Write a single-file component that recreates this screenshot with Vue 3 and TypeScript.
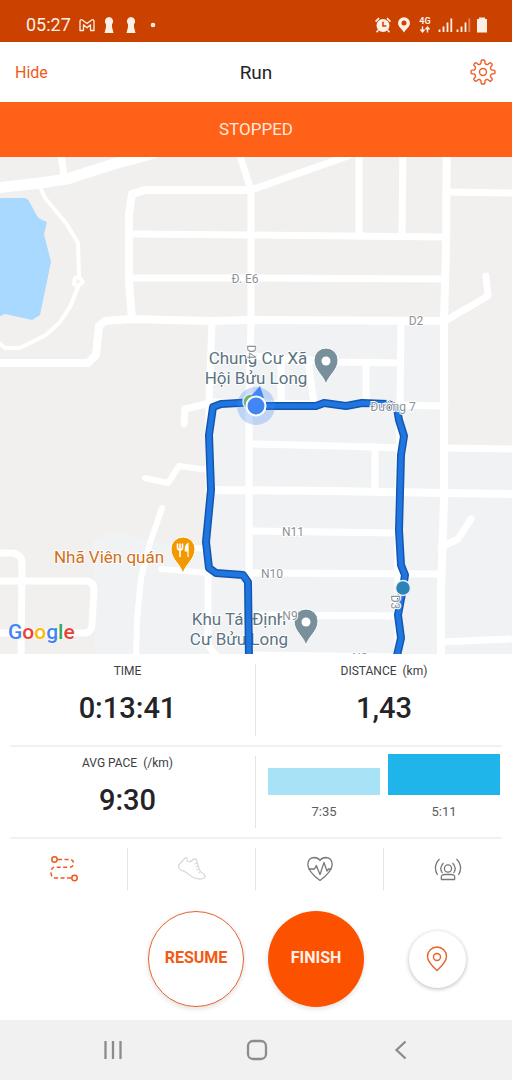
<script setup lang="ts">
interface Split {
  pace: string
  height: number
  current: boolean
}

interface MapLabel {
  text: string
  x: number
  y: number
}

const splits: Split[] = [
  { pace: '7:35', height: 27, current: false },
  { pace: '5:11', height: 41, current: true },
]

const roads: { width: number; paths: string[] }[] = [
  {
    width: 11,
    paths: ['M-4 188 L40 183 L67 179 L117 163 L147 155 L256 116 L290 100'],
  },
  {
    width: 8,
    paths: [
      'M447 102 L446 250 L444 321 L444 400 L444 500 L441 590 L441 660',
      'M-4 363 H88 L96 355 L99 326 L105 321 L130 319 L210 321 L250 320 L445 321',
      'M132 319 L129 280 L129 215 L132 194 L145 190 H251',
      'M210 490 L330 491 L445 493 L516 494',
    ],
  },
  {
    width: 7,
    paths: [
      'M54 102 L64 176',
      'M225 102 L240 156 L251 190 L251 320 L249 400 L249 660',
      'M251 190 L345 157 L400 132',
      'M131 234 L250 235 L445 237',
      'M131 278 L250 278 L445 279',
      'M359 152 V235',
      'M403 140 L402 235',
      'M447 192 L516 193',
      'M445 321 L488 296 L486 276',
      'M212 321 L209 402 L209 490',
      'M401 321 L400 405 L398 540 L398 660',
      'M250 356 L336 362 L400 363',
      'M281 362 V404',
      'M308 360 L314 404',
      'M366 364 V404',
      'M184 424 L185 409 L214 402 L445 406',
      'M250 444 L375 447 L400 448',
      'M445 448 L516 449',
      'M375 447 V490',
      'M250 531 L398 533',
      'M250 573 L441 574',
      'M250 615 L398 616',
      'M250 655 L398 657',
      'M441 547 L458 539 L471 519',
      'M441 642 L509 639',
      'M-4 553 H12 Q22 554 22 564 L21 660',
      'M-4 581 H86 Q94 582 94 590 L92 625 Q91 633 84 633 H-4',
      'M208 573 L208 643 Q210 650 218 657',
    ],
  },
  {
    width: 6,
    paths: [
      'M145 478 L168 483 L179 466 L209 470',
      'M162 508 L150 543 L141 578 L137 620 L136 660',
      'M161 569 L209 573',
      'M194 548 L208 549',
    ],
  },
  {
    width: 4,
    paths: [
      'M40 187 L45 198 L66 223 L78 243 L79 277',
      'M78 287 L70 307 L60 322 L46 335 L20 348 L5 348 L-4 340',
    ],
  },
]

const route =
  'M249 660 L248 582 L243 575 L216 573 L209 568 L206 542 L211 490 L209 435 L213 407 L221 404 L256 402 L256 406 H316 L324 403 L346 406 L362 403 L388 404 L397 408 L399 420 L404 436 L401 455 L399 530 L401 565 L405 575 L403 588 L398 615 L401 638 L396 660'

const streets: MapLabel[] = [
  { text: 'Đ. E6', x: 245, y: 283 },
  { text: 'D2', x: 416, y: 325 },
  { text: 'Đường 7', x: 393, y: 411 },
  { text: 'N11', x: 293, y: 536 },
  { text: 'N10', x: 272, y: 578 },
  { text: 'N9', x: 290, y: 620 },
  { text: 'N8', x: 360, y: 662 },
]

const places: MapLabel[] = [
  { text: 'Chung Cư Xã', x: 258, y: 364 },
  { text: 'Hội Bửu Long', x: 256, y: 384 },
  { text: 'Khu Tái Định', x: 239, y: 625 },
  { text: 'Cư Bửu Long', x: 239, y: 645 },
]

const pins = [
  { x: 326, y: 361 },
  { x: 306, y: 622 },
]

const pinShape = 'M0 24 C-2 14 -12 10 -12 -1 A12 12 0 0 1 12 -1 C12 10 2 14 0 24 Z'
</script>

<template>
  <div class="screen">
    <div class="status">
      <div class="status-group">
        <span class="clock">05:27</span>
        <svg class="cell22" viewBox="0 0 22 22" aria-hidden="true">
          <path d="M4 16.500 V7.200 Q4.300 5 6.300 6 L11 9.600 L15.700 6 Q17.700 5 18 7.200 V16.500 H14.500 V10.800 L11 13.800 L7.500 10.800 V16.500 Z" fill="none" stroke="#fdeee6" stroke-width="1.300" stroke-linejoin="round" />
        </svg>
        <svg v-for="n in 2" :key="n" class="cell22" viewBox="0 0 22 22" aria-hidden="true">
          <path d="M11 3 A4.500 4.500 0 0 1 14 10.500 L14 13 L15.500 19 H6.500 L8 13 L8 10.500 A4.500 4.500 0 0 1 11 3 Z" fill="#fdeee6" />
        </svg>
        <svg class="cell22" viewBox="0 0 22 22" aria-hidden="true">
          <circle cx="11" cy="11" r="2.300" fill="#fdeee6" />
        </svg>
      </div>
      <div class="status-group">
        <svg class="cell22" viewBox="0 0 22 22" aria-hidden="true">
          <circle cx="11" cy="11.500" r="6.500" fill="#fdeee6" />
          <path d="M11 7.800 V12 H14.300" fill="none" stroke="#cb4200" stroke-width="1.500" />
          <path d="M3.600 7.600 L7 4.200 M18.400 7.600 L15 4.200 M6.400 16 L4.600 18.200 M15.600 16 L17.400 18.200" stroke="#fdeee6" stroke-width="1.700" />
        </svg>
        <svg class="cell20" viewBox="0 0 20 22" aria-hidden="true">
          <path d="M10 18.500 C8 15 4 12.500 4 9.200 A6 6 0 0 1 16 9.200 C16 12.500 12 15 10 18.500 Z" fill="#fdeee6" />
          <circle cx="10" cy="9" r="2.500" fill="#cb4200" />
        </svg>
        <svg class="cell22" viewBox="0 0 22 22" aria-hidden="true">
          <text x="11" y="10" class="net">4G</text>
          <path d="M8.500 12.500 V17.500 M6.500 15.500 L8.500 18 L10.500 15.500 M13.500 18.500 V13.500 M11.500 15.500 L13.500 13 L15.500 15.500" fill="none" stroke="#fdeee6" stroke-width="1.400" />
        </svg>
        <svg v-for="n in 2" :key="n" class="cell18" viewBox="0 0 18 22" aria-hidden="true">
          <path d="M3.500 18 V15.500 M7.500 18 V12.500 M11.500 18 V8.500" stroke="#fdeee6" stroke-width="1.800" />
          <path d="M15.300 18 V4.500" stroke="#fdeee6" stroke-width="1.800" :opacity="n === 1 ? 1 : 0.4" />
        </svg>
        <svg class="cell20" viewBox="0 0 20 22" aria-hidden="true">
          <path d="M7 3.500 H13 V5 H15 V18.500 H5 V5 H7 Z" fill="#fdeee6" />
        </svg>
      </div>
    </div>

    <header class="header">
      <button type="button" class="hide">Hide</button>
      <h1>Run</h1>
      <button type="button" class="settings" aria-label="Settings">
        <svg viewBox="-14 -14 28 28" aria-hidden="true">
          <path d="M-2.600 -8 Q-1.900 -8.400 -1.900 -9.500 V-11 Q-1.700 -12 -0.700 -12 H0.700 Q1.700 -12 1.900 -11 V-9.500 Q1.900 -8.400 2.600 -8 L3.800 -7.500 Q4.600 -7.200 5.400 -8 L6.400 -9 Q7.200 -9.500 7.900 -8.900 L8.900 -7.900 Q9.500 -7.200 9 -6.400 L8 -5.400 Q7.200 -4.600 7.500 -3.800 L8 -2.600 Q8.400 -1.900 9.500 -1.900 H11 Q12 -1.700 12 -0.700 V0.700 Q12 1.700 11 1.900 H9.500 Q8.400 1.900 8 2.600 L7.500 3.800 Q7.200 4.600 8 5.400 L9 6.400 Q9.500 7.200 8.900 7.900 L7.900 8.900 Q7.200 9.500 6.400 9 L5.400 8 Q4.600 7.200 3.800 7.500 L2.600 8 Q1.900 8.400 1.900 9.500 V11 Q1.700 12 0.700 12 H-0.700 Q-1.700 12 -1.900 11 V9.500 Q-1.900 8.400 -2.600 8 L-3.800 7.500 Q-4.600 7.200 -5.400 8 L-6.400 9 Q-7.200 9.500 -7.900 8.900 L-8.900 7.900 Q-9.500 7.200 -9 6.400 L-8 5.400 Q-7.200 4.600 -7.500 3.800 L-8 2.600 Q-8.400 1.900 -9.500 1.900 H-11 Q-12 1.700 -12 0.700 V-0.700 Q-12 -1.700 -11 -1.900 H-9.500 Q-8.400 -1.900 -8 -2.600 L-7.500 -3.800 Q-7.200 -4.600 -8 -5.400 L-9 -6.400 Q-9.500 -7.200 -8.900 -7.900 L-7.900 -8.900 Q-7.200 -9.500 -6.400 -9 L-5.400 -8 Q-4.600 -7.200 -3.800 -7.500 Z" />
          <circle r="3.500" />
        </svg>
      </button>
    </header>

    <section class="map" aria-label="Route map">
      <svg class="canvas" viewBox="0 102 512 552" preserveAspectRatio="xMidYMid slice">
        <rect x="-600" y="-500" width="1800" height="1800" fill="#f1f0ef" />
        <path d="M212 322 H444 V446 L516 450 V660 H95 L93 541 L115 530 L160 543 L208 546 Z" fill="#f0f2f4" />
        <path d="M-4 198 H25 Q28 199 29 201 L37 216 Q39 219 47 222 L44 234 L51 262 L40 315 L32 320 L5 314 L-4 318 Z" fill="#a9d9ff" />
        <g fill="none" stroke="#ffffff" stroke-linecap="round" stroke-linejoin="round">
          <g v-for="group in roads" :key="group.width" :stroke-width="group.width">
            <path v-for="d in group.paths" :key="d" :d="d" />
          </g>
          <path d="M75 278 L79 277 L83 282 L78 286 L74 284 Z" stroke-width="4" fill="#f1f0ef" />
        </g>

        <g v-for="pin in pins" :key="pin.y" :transform="`translate(${pin.x} ${pin.y})`">
          <path :d="pinShape" fill="#78909c" stroke="#ffffff" stroke-width="1" />
          <circle r="4.500" fill="#ffffff" />
        </g>
        <g transform="translate(183 550)">
          <path :d="pinShape" fill="#f29900" stroke="#ffffff" stroke-width="1" />
          <path d="M-5.500 -6.500 V-2.500 Q-5.500 0 -3 0 Q-0.500 0 -0.500 -2.500 V-6.500 M-3 -6.500 V7" fill="none" stroke="#ffffff" stroke-width="1.600" />
          <path d="M5 7 V-6.500 Q2 -5 2.300 1 H5" fill="#ffffff" stroke="#ffffff" stroke-width="1.200" />
        </g>

        <text v-for="p in places" :key="p.text" class="label place" :x="p.x" :y="p.y">{{ p.text }}</text>
        <text class="label food" x="109" y="563">Nhã Viên quán</text>

        <g fill="none" stroke-linejoin="round">
          <path :d="route" stroke="#1456ad" stroke-width="8" />
          <path :d="route" stroke="#1f76e0" stroke-width="5" />
        </g>

        <text v-for="s in streets" :key="s.text" class="label street" :x="s.x" :y="s.y">{{ s.text }}</text>
        <text class="label street" transform="translate(247 352) rotate(90)">D4</text>
        <text class="label street" transform="translate(391 602) rotate(90)">D3</text>

        <circle cx="256" cy="406" r="19" fill="#4285f4" opacity="0.280" />
        <circle cx="251" cy="402" r="8" fill="#6db56c" stroke="#dfe9f8" stroke-width="1.500" />
        <path d="M251 396 L260 386 L264 398 Z" fill="#4285f4" />
        <circle cx="256" cy="406" r="9.500" fill="#4285f4" stroke="#ffffff" stroke-width="2" />
        <circle cx="403" cy="588" r="7.500" fill="#2b83b8" stroke="#e8f1f6" stroke-width="1.500" />
      </svg>
      <p class="banner" role="status">STOPPED</p>
      <div class="google"><span class="blue">G</span><span class="red">o</span><span class="yellow">o</span><span class="blue">g</span><span class="green">l</span><span class="red">e</span></div>
    </section>

    <section class="stats">
      <div class="row">
        <div class="stat">
          <span class="name">TIME</span>
          <span class="value">0:13:41</span>
        </div>
        <div class="stat">
          <span class="name">DISTANCE&nbsp; (km)</span>
          <span class="value">1,43</span>
        </div>
      </div>
      <div class="row">
        <div class="stat">
          <span class="name">AVG PACE&nbsp; (/km)</span>
          <span class="value">9:30</span>
        </div>
        <div class="splits">
          <div v-for="s in splits" :key="s.pace" class="split">
            <div class="track">
              <div class="bar" :class="{ current: s.current }" :style="{ height: s.height + 'px' }"></div>
            </div>
            <span>{{ s.pace }}</span>
          </div>
        </div>
      </div>
    </section>

    <nav class="tabs" aria-label="Workout tools">
      <button type="button" class="active" aria-label="Routes">
        <svg viewBox="0 0 30 30" aria-hidden="true">
          <circle cx="5.500" cy="5.500" r="2.700" />
          <circle cx="25.500" cy="24" r="2.700" />
          <path d="M9 5.500 H20 Q24.500 5.500 24.500 9.300 Q24.500 13.200 20 13.200 H6 Q2 13.200 2 18.500 Q2 24 7 24 H22.500" stroke-dasharray="4 2.500" />
        </svg>
      </button>
      <button type="button" class="faint" aria-label="Shoes">
        <svg viewBox="0 0 30 30" aria-hidden="true">
          <path d="M8.500 3.500 L1.700 11 Q1 14 3.500 15.800 Q8 17 12 20.500 Q17 25 23 25 Q28 24.800 28.300 22.500 Q27.500 20 23.500 17.500 Q21.500 15 19.500 5.500 L16.500 5 Q14 8.500 11 7.500 Q9.500 6.500 10 4.200 Z M20.300 9 L17.500 10 M21 12 L18.500 13 M22 15 L19.500 16 M24 17.500 L21.500 19" />
        </svg>
      </button>
      <button type="button" aria-label="Heart rate">
        <svg viewBox="0 0 30 30" aria-hidden="true">
          <path d="M15 26.500 Q3 17.500 2.800 10.500 Q3 4 9 3.500 Q13 3.500 15 6.500 Q17 3.500 21 3.500 Q27 4 27.200 10.500 Q27 17.500 15 26.500 Z" />
          <path d="M3.500 15 H9.500 L11.300 11.500 L15 20.500 L19 8.500 L22 17 L23.500 15 H26.500" />
        </svg>
      </button>
      <button type="button" aria-label="Beacon">
        <svg viewBox="0 0 30 30" aria-hidden="true">
          <circle cx="15" cy="14.500" r="3.600" />
          <path d="M8.500 25.500 Q7.300 20.500 11.500 20.500 H18.500 Q22.700 20.500 21.500 25.500 Z M10.500 9 Q5.500 14 9.500 19 M19.500 9 Q24.500 14 20.500 19 M6.500 5 Q-0.500 12.500 4.500 21 M23.500 5 Q30.500 12.500 25.500 21" />
        </svg>
      </button>
    </nav>

    <div class="actions">
      <button type="button" class="round resume">RESUME</button>
      <button type="button" class="round finish">FINISH</button>
      <button type="button" class="locate" aria-label="Show my location">
        <svg viewBox="0 0 24 28" aria-hidden="true">
          <path d="M12 25.500 Q2.500 17 2.500 11.500 A9.500 9.500 0 0 1 21.500 11.500 Q21.500 17 12 25.500 Z" />
          <circle cx="12" cy="12" r="3.500" />
        </svg>
      </button>
    </div>

    <nav class="system" aria-label="System">
      <button type="button" aria-label="Recent apps">
        <svg viewBox="0 0 24 24" aria-hidden="true">
          <path d="M4.500 3 V21 M12 3 V21 M19.500 3 V21" />
        </svg>
      </button>
      <button type="button" aria-label="Home">
        <svg viewBox="0 0 24 24" aria-hidden="true">
          <rect x="3" y="3" width="18" height="18" rx="5" />
        </svg>
      </button>
      <button type="button" aria-label="Back">
        <svg viewBox="0 0 24 24" aria-hidden="true">
          <path d="M16.500 3.500 L7.500 12 L16.500 20.500" />
        </svg>
      </button>
    </nav>
  </div>
</template>

<style>
body {
  margin: 0;
}
</style>

<style scoped>
.screen {
  display: flex;
  flex-direction: column;
  min-height: 100vh;
  background: #ffffff;
  color: #242428;
  font-family: Roboto, "Noto Sans", sans-serif;
}

button {
  display: flex;
  align-items: center;
  justify-content: center;
  margin: 0;
  padding: 0;
  border: 0;
  background: none;
  font: inherit;
  color: inherit;
  cursor: pointer;
}

svg {
  display: block;
}

.status {
  display: flex;
  align-items: center;
  justify-content: space-between;
  height: 42px;
  padding: 8px 20px 0 26px;
  box-sizing: border-box;
  background: #cb4200;
  color: #fdeee6;
}

.status-group {
  display: flex;
  align-items: center;
}

.clock {
  margin-right: 5px;
  font-size: 18px;
  line-height: 22px;
}

.cell22 {
  width: 22px;
  height: 22px;
}

.cell20 {
  width: 20px;
  height: 22px;
}

.cell18 {
  width: 18px;
  height: 22px;
}

.net {
  fill: #fdeee6;
  font-size: 9px;
  font-weight: 700;
  text-anchor: middle;
}

.header {
  display: grid;
  grid-template-columns: 1fr auto 1fr;
  align-items: center;
  height: 60px;
  padding: 0 15px;
}

.header h1 {
  margin: 0;
  font-size: 19px;
  font-weight: 400;
}

.hide {
  justify-self: start;
  color: #ee5a1b;
  font-size: 16px;
}

.settings {
  justify-self: end;
}

.settings svg {
  width: 28px;
  height: 28px;
  fill: none;
  stroke: #ea6029;
  stroke-width: 1.4;
  stroke-linejoin: round;
}

.map {
  position: relative;
  flex: 1 0 400px;
  overflow: hidden;
}

.canvas {
  position: absolute;
  inset: 0;
  width: 100%;
  height: 100%;
}

.banner {
  position: absolute;
  inset: 0 0 auto;
  margin: 0;
  background: rgba(255, 91, 15, 0.96);
  color: #ffe9dc;
  font-size: 17px;
  line-height: 55px;
  text-align: center;
}

.label {
  paint-order: stroke;
  stroke: #ffffff;
  stroke-width: 2px;
  stroke-linejoin: round;
  text-anchor: middle;
}

.place {
  fill: #5b737f;
  font-size: 17px;
}

.food {
  fill: #cf701c;
  font-size: 17px;
}

.street {
  fill: #8d9297;
  font-size: 12px;
}

.google {
  position: absolute;
  left: 8px;
  bottom: 8px;
  font-size: 21px;
  font-weight: 500;
  line-height: 28px;
  text-shadow: 0 0 2px #ffffff;
}

.blue {
  color: #4285f4;
}

.red {
  color: #ea4335;
}

.yellow {
  color: #fbbc05;
}

.green {
  color: #34a853;
}

.stats {
  padding: 0 10px;
}

.row {
  display: grid;
  grid-template-columns: 1fr 1fr;
  padding: 10px 0 9px;
  border-bottom: 2px solid #f1f1f1;
}

.row:last-child {
  padding-top: 7px;
}

.row:last-child .stat {
  margin-top: 2px;
}

.stat {
  display: flex;
  flex-direction: column;
  align-items: center;
  height: 72px;
  padding-left: 10px;
}

.stat:first-child {
  padding: 0 10px 0 0;
  border-right: 1px solid #e4e4e4;
}

.name {
  font-size: 12px;
  line-height: 14px;
  color: #3d3d42;
}

.value {
  margin-top: 12px;
  font-size: 29px;
  font-weight: 500;
  line-height: 36px;
}

.splits {
  display: grid;
  grid-template-columns: 1fr 1fr;
  gap: 8px;
  padding: 0 2px 0 12px;
}

.split {
  text-align: center;
  font-size: 13px;
  line-height: 16px;
  color: #5c5c61;
}

.track {
  display: flex;
  align-items: flex-end;
  height: 41px;
  margin-bottom: 9px;
}

.bar {
  width: 100%;
  background: #a7e2f6;
}

.bar.current {
  background: #20b5ea;
}

.tabs {
  display: grid;
  grid-template-columns: repeat(4, 1fr);
  padding: 9px 0;
}

.tabs button {
  height: 42px;
  border-right: 1px solid #e4e4e4;
}

.tabs button:last-child {
  border-right: 0;
}

.tabs svg {
  width: 30px;
  height: 30px;
  fill: none;
  stroke: #77777c;
  stroke-width: 1.3;
  stroke-linejoin: round;
}

.tabs .active svg {
  stroke: #ee5a1b;
  stroke-width: 1.5;
}

.tabs .faint svg {
  stroke: #dadada;
}

.actions {
  display: grid;
  grid-template-columns: 1fr auto auto 1fr;
  column-gap: 24px;
  align-items: center;
  padding: 12px 0 13px;
}

.round {
  width: 96px;
  height: 96px;
  padding-bottom: 4px;
  border-radius: 50%;
  font-size: 16px;
  font-weight: 700;
  box-shadow: 0 2px 5px rgba(0, 0, 0, 0.12);
}

.resume {
  grid-column: 2;
  border: 1px solid #e8622a;
  background: #ffffff;
  color: #f25a14;
}

.finish {
  background: #fc5200;
  color: #fff1e9;
}

.locate {
  justify-self: center;
  width: 57px;
  height: 57px;
  margin-right: 26px;
  border-radius: 50%;
  background: #ffffff;
  box-shadow: 0 1px 4px rgba(0, 0, 0, 0.28);
}

.locate svg {
  width: 24px;
  height: 28px;
  fill: none;
  stroke: #e8622a;
  stroke-width: 1.4;
}

.system {
  display: flex;
  align-items: center;
  justify-content: center;
  gap: 120px;
  height: 60px;
  padding-left: 2px;
  background: #f1f1f1;
}

.system svg {
  width: 24px;
  height: 24px;
  fill: none;
  stroke: #8c8c8c;
  stroke-width: 2.3;
}
</style>
